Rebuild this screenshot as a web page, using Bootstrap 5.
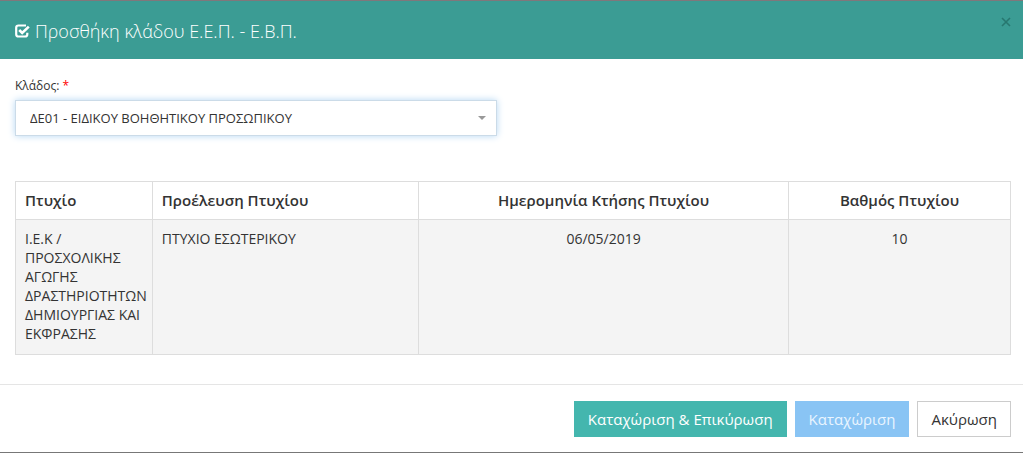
<!DOCTYPE html>
<html lang="el">
<head>
<meta charset="utf-8">
<meta name="viewport" content="width=device-width, initial-scale=1">
<title>Προσθήκη κλάδου Ε.Ε.Π. - Ε.Β.Π.</title>
<link href="https://cdn.jsdelivr.net/npm/bootstrap@5.3.0/dist/css/bootstrap.min.css" rel="stylesheet">
<style>
  body { font-family: "Open Sans", "Noto Sans", sans-serif; font-size: 14px; line-height: 20px; color: #333; }
  .dialog-panel { border-top: 1px solid #80777b; border-bottom: 1px solid #777; }
  .dialog-head { background: #3b9c94; color: #fff; padding: 18px 15px 16px; }
  .dialog-title { font-size: 18px; line-height: 24px; font-weight: 300; gap: 5px; }
  .dialog-close { top: 9px; right: 9px; width: 16px; height: 24px; color: #27776f; }
  .dialog-main { padding: 18px 12px 29px 15px; }
  .field-label { font-size: 12px; line-height: 18px; margin-bottom: 5px; }
  .field-label span { color: #f00; }
  .branch-field { max-width: 482px; margin-bottom: 45px; }
  .branch-select {
    height: 36px; padding: 0 28px 0 14px; font-size: 13px; line-height: 32px; color: #333;
    border: 1px solid #cbdbe8; border-radius: 0; box-shadow: 0 0 7px #b5d7f3;
    background-image: url("data:image/svg+xml,%3Csvg xmlns='http://www.w3.org/2000/svg' viewBox='0 0 8 4'%3E%3Cpath d='M0 0h8L4 4z' fill='%23999'/%3E%3C/svg%3E");
    background-size: 8px 4px; background-position: right 10px center;
  }
  .branch-select:focus { border-color: #cbdbe8; box-shadow: 0 0 7px #b5d7f3; }
  .degree-table { --bs-table-color: #333; border-color: #ddd; table-layout: fixed; }
  .degree-table th, .degree-table td { padding: 9px; color: #333; }
  .degree-table th { font-size: 15px; font-weight: 600; line-height: 19px; }
  .degree-table td { background: #f4f4f4; font-size: 14px; line-height: 19px; padding-bottom: 11px; }
  .dialog-foot { border-top: 1px solid #e5e5e5; padding: 16px 12px 15px; }
  .action-btn { --bs-btn-font-size: 15px; --bs-btn-line-height: 20px; --bs-btn-padding-y: 7px; --bs-btn-padding-x: 13px; --bs-btn-border-radius: 0; }
  .action-main { --bs-btn-bg: #44b6ae; --bs-btn-color: #fff; --bs-btn-border-color: #44b6ae; --bs-btn-hover-bg: #3b9c94; --bs-btn-hover-color: #fff; }
  .action-save { --bs-btn-disabled-bg: #89c4f4; --bs-btn-disabled-color: #e9f5ff; --bs-btn-disabled-border-color: #89c4f4; --bs-btn-disabled-opacity: 1; }
  .action-cancel { --bs-btn-bg: #fff; --bs-btn-color: #333; --bs-btn-border-color: #ccc; --bs-btn-hover-bg: #eee; }
</style>
<script src="https://cdn.jsdelivr.net/npm/bootstrap@5.3.0/dist/js/bootstrap.bundle.min.js"></script>
</head>
<body>
<div class="dialog-panel">
  <header class="dialog-head position-relative">
    <h1 class="dialog-title d-flex align-items-center m-0">
      <svg width="15" height="14" viewBox="0 0 15 14" fill="none" aria-hidden="true">
        <path d="M11 1.5H3.5Q1.2 1.5 1.2 3.8v6.4q0 2.3 2.3 2.3H10q2.3 0 2.3-2.3V8.7" stroke="#fff" stroke-width="2.2"/>
        <path d="M4.2 6l3 3L13.8 2.6" stroke="#fff" stroke-width="2.6"/>
      </svg>
      <span>Προσθήκη κλάδου Ε.Ε.Π. - Ε.Β.Π.</span>
    </h1>
    <button type="button" class="dialog-close btn border-0 p-0 position-absolute d-flex align-items-center justify-content-center" aria-label="Κλείσιμο">
      <svg width="10" height="10" viewBox="0 0 10 10" aria-hidden="true"><path d="M1 1l8 8M9 1L1 9" stroke="currentColor" stroke-width="1.6"/></svg>
    </button>
  </header>

  <main class="dialog-main">
    <div class="branch-field">
      <label class="field-label d-block" for="branch">Κλάδος: <span>*</span></label>
      <select id="branch" class="form-select branch-select" required>
        <option>ΔΕ01 - ΕΙΔΙΚΟΥ ΒΟΗΘΗΤΙΚΟΥ ΠΡΟΣΩΠΙΚΟΥ</option>
      </select>
    </div>
    <table class="table table-bordered degree-table m-0">
      <colgroup><col style="width:13.75%"><col style="width:26.75%"><col style="width:37.2%"><col style="width:22.3%"></colgroup>
      <thead>
        <tr>
          <th scope="col">Πτυχίο</th>
          <th scope="col">Προέλευση Πτυχίου</th>
          <th scope="col" class="text-center">Ημερομηνία Κτήσης Πτυχίου</th>
          <th scope="col" class="text-center">Βαθμός Πτυχίου</th>
        </tr>
      </thead>
      <tbody>
        <tr>
          <td>Ι.Ε.Κ / ΠΡΟΣΧΟΛΙΚΗΣ ΑΓΩΓΗΣ ΔΡΑΣΤΗΡΙΟΤΗΤΩΝ ΔΗΜΙΟΥΡΓΙΑΣ ΚΑΙ ΕΚΦΡΑΣΗΣ</td>
          <td>ΠΤΥΧΙΟ ΕΣΩΤΕΡΙΚΟΥ</td>
          <td class="text-center">06/05/2019</td>
          <td class="text-center">10</td>
        </tr>
      </tbody>
    </table>
  </main>

  <footer class="dialog-foot d-flex flex-wrap justify-content-end gap-2">
    <button type="button" class="btn action-btn action-main">Καταχώριση &amp; Επικύρωση</button>
    <button type="button" class="btn action-btn action-save" disabled>Καταχώριση</button>
    <button type="button" class="btn action-btn action-cancel">Ακύρωση</button>
  </footer>
</div>
</body>
</html>
